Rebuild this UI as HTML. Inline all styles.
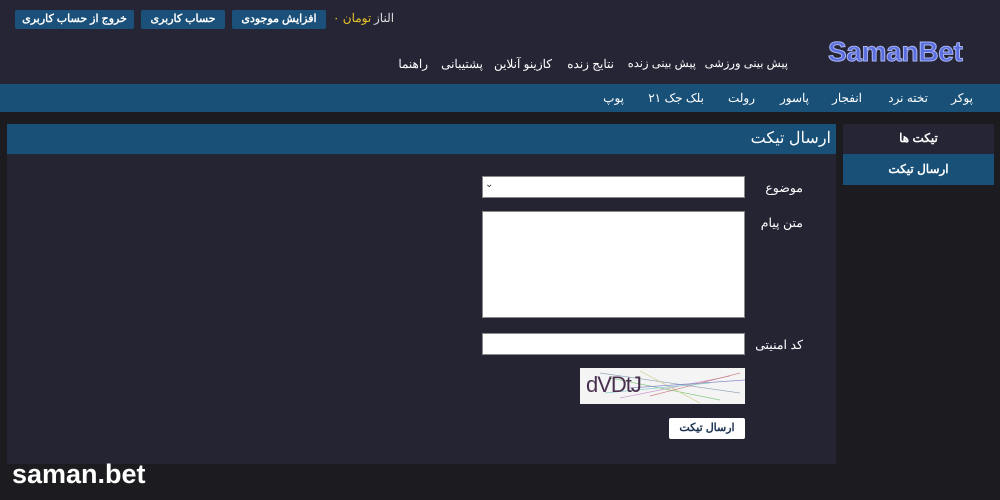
<!DOCTYPE html>
<html><head><meta charset="utf-8"><style>
*{box-sizing:border-box;margin:0;padding:0}
body{width:1000px;height:500px;background:#1c1c20;position:relative;overflow:hidden;font-family:"Liberation Sans","Noto Sans CJK SC",sans-serif;color:#e8e8ee}
.a{position:absolute}
.hdr{left:0;top:0;width:1000px;height:84px;background:#262535}
.btn{top:10px;height:19px;background:#1a5079;border-radius:2px;color:#fff;font-size:11px;font-weight:bold;text-align:center;line-height:19px}
.nav{font-size:12px;color:#fff;top:55px;line-height:18px;direction:rtl;white-space:nowrap}
.bar{left:0;top:84px;width:1000px;height:28px;background:#195077}
.sub{font-size:12px;color:#fff;top:90px;line-height:16px;white-space:nowrap}
.inp{background:#fff;border:1px solid #888}
.lbl{font-size:13px;color:#fff;direction:rtl;white-space:nowrap}
</style></head><body>
<div class="a hdr"></div>
<div class="a btn" style="left:15px;width:119px">خروج از حساب کاربری</div>
<div class="a btn" style="left:141px;width:84px">حساب کاربری</div>
<div class="a btn" style="left:232px;width:94px">افزایش موجودی</div>
<div class="a" style="left:333px;top:11px;font-size:12px;color:#e6c229;white-space:nowrap">تومان ۰</div>
<div class="a" style="left:374px;top:11px;font-size:12px;color:#ddd">الناز</div>
<div class="a" style="left:828px;top:36px;font-size:28px;font-weight:bold;color:#5b6ee0;-webkit-text-stroke:1px #a9b4f0;letter-spacing:-0.3px">SamanBet</div>
<div class="a nav" style="right:212px;font-size:11.5px">پیش بینی ورزشی</div>
<div class="a nav" style="right:304px;font-size:11.5px">پیش بینی زنده</div>
<div class="a nav" style="right:386px">نتایج زنده</div>
<div class="a nav" style="right:448px">کازینو آنلاین</div>
<div class="a nav" style="right:517px">پشتیبانی</div>
<div class="a nav" style="right:572px">راهنما</div>
<div class="a bar"></div>
<div class="a sub" style="right:27px">پوکر</div>
<div class="a sub" style="right:72px">تخته نرد</div>
<div class="a sub" style="right:138px">انفجار</div>
<div class="a sub" style="right:191px">پاسور</div>
<div class="a sub" style="right:245px">رولت</div>
<div class="a sub" style="right:296px">بلک جک ۲۱</div>
<div class="a sub" style="right:376px">پوپ</div>
<div class="a" style="left:7px;top:124px;width:829px;height:340px;background:#252433"></div>
<div class="a" style="left:7px;top:124px;width:829px;height:30px;background:#195077"></div>
<div class="a lbl" style="right:169px;top:128px;font-size:16px">ارسال تیکت</div>
<div class="a" style="left:843px;top:124px;width:151px;height:30px;background:#262535"></div>
<div class="a" style="left:843px;top:154px;width:151px;height:31px;background:#195077"></div>
<div class="a lbl" style="left:843px;width:151px;text-align:center;top:131px;font-size:12px;font-weight:bold">تیکت ها</div>
<div class="a lbl" style="left:843px;width:151px;text-align:center;top:162px;font-size:12px;font-weight:bold">ارسال تیکت</div>
<div class="a inp" style="left:482px;top:176px;width:263px;height:22px"><span style="position:absolute;left:2px;top:2px;font-size:10px;color:#333">⌄</span></div>
<div class="a lbl" style="right:197px;top:180px;font-size:12.5px">موضوع</div>
<div class="a inp" style="left:482px;top:211px;width:263px;height:107px"></div>
<div class="a lbl" style="right:197px;top:215px;font-size:12.5px">متن پیام</div>
<div class="a inp" style="left:482px;top:333px;width:263px;height:22px"></div>
<div class="a lbl" style="right:197px;top:337px;font-size:12.5px">کد امنیتی</div>
<div class="a" style="left:580px;top:368px;width:165px;height:36px;background:#f4f4f4;overflow:hidden">
<svg width="165" height="36" style="position:absolute;left:0;top:0"><g stroke-width="0.7" fill="none"><path d="M20 5 L160 25" stroke="#9ab"/><path d="M40 30 L150 8" stroke="#c9c"/><path d="M30 10 L140 32" stroke="#8c8"/><path d="M60 3 L120 35" stroke="#cc8"/><path d="M50 20 L165 12" stroke="#88c"/><path d="M70 28 L160 5" stroke="#c88"/><path d="M25 25 L130 15" stroke="#8cc"/></g></svg>
<span style="position:absolute;left:6px;top:4px;font-size:22px;color:#4a3050;letter-spacing:-1px">dVDtJ</span></div>
<div class="a" style="left:669px;top:418px;width:76px;height:21px;background:#fff;border-radius:2px;color:#1a3050;font-size:11px;font-weight:bold;text-align:center;line-height:21px">ارسال تیکت</div>
<div class="a" style="left:12px;top:459px;font-size:27px;font-weight:bold;color:#fff;letter-spacing:0px">saman.bet</div>
</body></html>
